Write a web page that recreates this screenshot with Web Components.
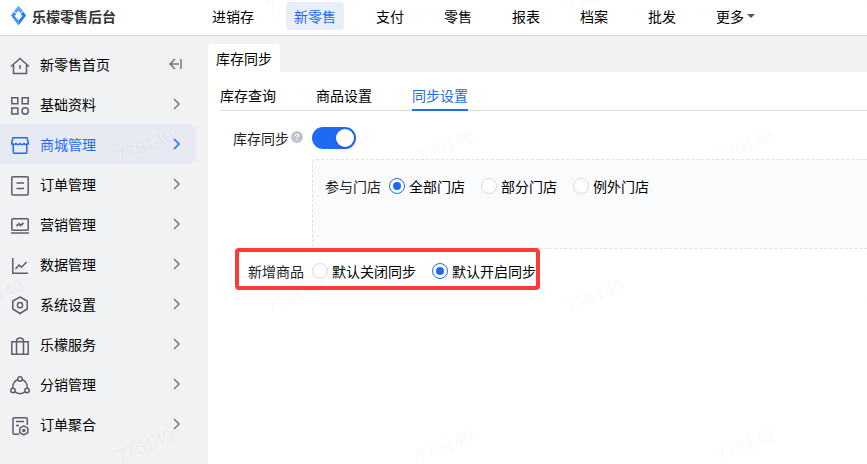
<!DOCTYPE html>
<html lang="zh-CN">
<head>
<meta charset="utf-8">
<title>乐檬零售后台</title>
<style>
  body {
    margin: 0;
    font: 14px/20px "Noto Sans CJK SC", sans-serif;
    color: #000;
    background: #f1f2f4;
  }
</style>
</head>
<body>
<retail-app></retail-app>

<script>
const icons = {
  home: `<path d="M1 14.500 10 6.500l9 8M3.500 13v8.500h13V13M10 13v4"/>`,
  grid: `<path d="M1.800 5.800h6v6h-6zM12.200 5.800h6v6h-6zM1.800 16h6v6h-6z"/><circle cx="15.200" cy="19" r="3.200"/>`,
  shop: `<path d="M3 5.800h14l1.300 4.700v1.500h-1.500v8.200q0 1-1 1H4.200q-1 0-1-1V12H1.700v-1.500zM2 11.500q2 2.200 4 0 2 2.200 4 0 2 2.200 4 0 2 2.200 4 0"/>`,
  order: `<rect x="1.800" y="4.800" width="16.400" height="18.200" rx="1"/><path d="M6.500 11h7.500M6.500 16.500h7.500"/>`,
  market: `<rect x="1.800" y="6.800" width="16.400" height="11.400" rx="1"/><path d="M1 21h18"/><path d="M6.500 14l2.500-2.300 1.500 1.800 3-2.500" stroke-width="1.800"/>`,
  chart: `<path d="M2.800 6v15.300H18M5.500 17l3.500-4 2.500 2.300 5.200-5.300"/>`,
  setting: `<path d="M10 5l7.200 4v8L10 21.500 2.800 17V9z"/><circle cx="10" cy="13.200" r="2.600"/>`,
  service: `<path d="M1.800 9.800h16.400V22.200H1.800zM6.500 22V9.500q0-3.500 3.500-3.500t3.500 3.500V22"/>`,
  share: `<circle cx="10" cy="7" r="2.200"/><circle cx="3" cy="18.500" r="2.200"/><circle cx="17" cy="18.500" r="2.200"/><path d="M7.800 7.500Q2.500 10 2.600 16.300M12.200 7.500Q17.500 10 17.400 16.300M5 19.900q5 3.600 10 0"/>`,
  merge: `<path d="M9 22.200H4q-1 0-1-1V6.800q0-1 1-1h12.300q1 0 1 1V13M6 9.500h8M6 13.500h3"/><path d="M13.800 13.800l4 2.300v4.600l-4 2.300-4-2.300v-4.600z"/><circle cx="13.800" cy="18.400" r="1"/>`,
};

function define(name, html, setup) {
  customElements.define(name, class extends HTMLElement {
    constructor() {
      super();
      this.attachShadow({ mode: "open" });
    }

    connectedCallback() {
      this.shadowRoot.innerHTML = typeof html === "function" ? html(this) : html;
      if (setup) setup(this);
    }
  });
}

define("brand-logo", `
  <style>
    :host { display: flex; align-items: center; gap: 6px; font-weight: 700; color: #333; }
    svg { display: block; }
  </style>
  <svg width="16" height="22" viewBox="0 0 16 22" aria-hidden="true">
    <path d="M8.500 1 13 5.800 10.800 8.200 8.500 5.800 6.200 8.200 4 5.800z" fill="#5aaafb"/>
    <path d="M3.600 6.800 1 10.500 8.500 20.500V15.500L4.600 11 6.400 9z" fill="#3f92fb"/>
    <path d="M13.400 6.800 16 10.500 8.500 20.500V15.500L12.400 11 10.600 9z" fill="#2479fa"/>
  </svg>
  <slot></slot>
`);

define("top-link", el => `
  <style>
    :host { display: block; }
    a {
      display: flex; align-items: center; gap: 3px; padding: 4px 8px;
      border-radius: 4px; color: inherit; text-decoration: none; white-space: nowrap;
    }
    :host([active]) a { background: #e8eefc; color: #1f6af5; }
    i { border: 4px solid transparent; border-top-color: #555; border-bottom: 0; }
  </style>
  <a href="#"><slot></slot>${el.hasAttribute("more") ? "<i></i>" : ""}</a>
`);

define("top-bar", `
  <style>
    :host {
      display: flex; align-items: flex-start; height: 35px;
      background: #fff; border-bottom: 1px solid #dadbdc;
    }
    brand-logo { flex: 0 0 194px; padding: 5px 0 0 10px; }
    nav { display: flex; gap: 24px; padding-top: 2px; }
  </style>
  <brand-logo>乐檬零售后台</brand-logo>
  <nav>
    <top-link>进销存</top-link>
    <top-link active>新零售</top-link>
    <top-link>支付</top-link>
    <top-link>零售</top-link>
    <top-link>报表</top-link>
    <top-link>档案</top-link>
    <top-link>批发</top-link>
    <top-link more>更多</top-link>
  </nav>
`);

define("side-item", el => `
  <style>
    :host { display: flex; align-items: center; height: 40px; padding-right: 14px; border-radius: 0 8px 8px 0; }
    :host([active]) { background: #e8eaf3; color: #1f6af5; }
    a {
      flex: 1; display: flex; align-items: center; gap: 10px;
      padding-left: 10px; color: inherit; text-decoration: none;
    }
    svg { display: block; fill: none; stroke: #5c5e6b; stroke-width: 1.500; }
    .arrow, button svg { stroke: #777; }
    :host([active]) svg { stroke: #1f6af5; }
    button { padding: 0; border: 0; background: none; }
  </style>
  <a href="#">
    <svg width="20" height="24" viewBox="0 0 20 24" aria-hidden="true">${icons[el.getAttribute("icon")]}</svg>
    <slot></slot>
  </a>
  ${el.hasAttribute("collapse")
    ? `<button aria-label="collapse"><svg width="14" height="14" viewBox="0 0 14 14"><path d="M13 2v10M11 7H2M7 2 2 7l5 5"/></svg></button>`
    : `<svg class="arrow" width="10" height="12" viewBox="0 0 10 12" aria-hidden="true"><path d="M2 1l5 5-5 5"/></svg>`}
`);

define("side-menu", `
  <style>
    :host { display: block; padding-top: 8px; }
  </style>
  <nav>
    <side-item icon="home" collapse>新零售首页</side-item>
    <side-item icon="grid">基础资料</side-item>
    <side-item icon="shop" active>商城管理</side-item>
    <side-item icon="order">订单管理</side-item>
    <side-item icon="market">营销管理</side-item>
    <side-item icon="chart">数据管理</side-item>
    <side-item icon="setting">系统设置</side-item>
    <side-item icon="service">乐檬服务</side-item>
    <side-item icon="share">分销管理</side-item>
    <side-item icon="merge">订单聚合</side-item>
  </nav>
`);

define("sub-tabs", `
  <style>
    :host { display: flex; gap: 40px; height: 38px; border-bottom: 1px solid #dadbdc; }
    button {
      padding: 12px 0 3px; border: 0; border-bottom: 2px solid transparent; margin-bottom: -1px;
      background: none; font: inherit; color: inherit;
    }
    .active { color: #1f6af5; border-color: #1f6af5; }
  </style>
  <button>库存查询</button>
  <button>商品设置</button>
  <button class="active">同步设置</button>
`);

// options: comma separated labels, checked: index of the selected one
define("radio-group", el => `
  <style>
    :host { display: flex; gap: 16px; }
    label { display: flex; align-items: center; gap: 4px; white-space: nowrap; }
    input {
      appearance: none; box-sizing: border-box; width: 16px; height: 16px; margin: 0;
      border: 1px solid #d9d9d9; border-radius: 50%; background: #fff;
      display: grid; place-items: center;
    }
    input:checked { border-color: #1f6af5; }
    input:checked::before {
      content: ""; width: 8px; height: 8px; border-radius: 50%; background: #1f6af5;
    }
  </style>
  ${el.getAttribute("options").split(",").map((text, i) => `
    <label><input type="radio" name="option"${i == el.getAttribute("checked") ? " checked" : ""}>${text}</label>
  `).join("")}
`);

define("toggle-switch", `
  <style>
    :host { display: block; }
    input {
      appearance: none; display: flex; justify-content: flex-end; box-sizing: border-box;
      width: 44px; height: 22px; margin: 0; padding: 2px; border-radius: 11px; background: #bbb;
    }
    input:checked { background: #1f6af5; }
    input::before {
      content: ""; width: 18px; height: 18px; border-radius: 50%;
      background: #fff; box-shadow: 0 2px 4px #00230b33;
    }
    input:not(:checked) { justify-content: flex-start; }
  </style>
  <input type="checkbox" role="switch" aria-label="库存同步" checked>
`);

define("sync-form", `
  <style>
    :host { display: block; color: #222; }
    .row { display: flex; align-items: center; }
    .switch { padding: 16px 0 10px 13px; }
    svg { display: block; margin: 0 9px 2px 2px; }
    .stores {
      box-sizing: border-box; min-height: 90px; margin-left: 92px; padding: 16px 12px;
      border: 1px dashed #dfe1e5; border-right: 0; border-radius: 4px 0 0 4px; background: #fafbfd;
    }
    radio-group { margin-left: 8px; color: #000; }
    .goods {
      display: inline-flex; margin: -1px 0 0 15px; padding: 9px 0 5px 9px;
      position: relative; height: 20px; border: 4px solid #fb3a3a; border-radius: 4px;
    }
  </style>
  <div class="row switch">
    <span>库存同步</span>
    <svg width="12" height="12" viewBox="0 0 12 12" aria-hidden="true">
      <circle cx="6" cy="6" r="6" fill="#bfc3cf"/>
      <path d="M4.300 4.700Q4.300 3 6 3t1.700 1.500Q7.700 5.300 6 6v1M6 8v1.200" fill="none" stroke="#fff" stroke-width="1.200"/>
    </svg>
    <toggle-switch></toggle-switch>
  </div>
  <div class="stores">
    <div class="row">
      <span>参与门店</span>
      <radio-group options="全部门店,部分门店,例外门店" checked="0"></radio-group>
    </div>
  </div>
  <div class="row goods">
    <span>新增商品</span>
    <radio-group options="默认关闭同步,默认开启同步" checked="1"></radio-group>
  </div>
`);

define("page-panel", `
  <style>
    :host { display: flex; flex-direction: column; padding-top: 8px; }
    .tab {
      align-self: flex-start; padding: 4px 8px; border: 0; border-radius: 4px 4px 0 0;
      background: #fff; font: inherit; color: inherit;
    }
    main { flex: 1; padding-left: 12px; background: #fff; }
  </style>
  <button class="tab">库存同步</button>
  <main><slot></slot></main>
`);

// repeats the mark on two staggered 300px lattices
define("water-mark", `
  <style>
    :host { position: absolute; inset: 0; overflow: hidden; pointer-events: none; }
    span {
      position: absolute; transform: translate(-50%, -50%) rotate(-22deg);
      font: 18px/20px "Liberation Sans", sans-serif; color: rgba(0, 0, 0, 0.04);
    }
  </style>
`, el => {
  for (const [startX, startY] of [[145, 146], [-5, -4]]) {
    for (let y = startY; y < innerHeight + 30; y += 300) {
      for (let x = startX; x < innerWidth + 30; x += 300) {
        const mark = document.createElement("span");
        mark.textContent = el.getAttribute("text");
        mark.style.left = x + "px";
        mark.style.top = y + "px";
        el.shadowRoot.append(mark);
      }
    }
  }
});

define("retail-app", `
  <style>
    :host { display: flex; flex-direction: column; position: relative; min-height: 100vh; overflow: hidden; }
    .body { flex: 1; display: grid; grid-template-columns: 196px 1fr; column-gap: 12px; }
  </style>
  <top-bar></top-bar>
  <div class="body">
    <side-menu></side-menu>
    <page-panel>
      <sub-tabs></sub-tabs>
      <sync-form></sync-form>
    </page-panel>
  </div>
  <water-mark text="776140"></water-mark>
`);
</script>
</body>
</html>
